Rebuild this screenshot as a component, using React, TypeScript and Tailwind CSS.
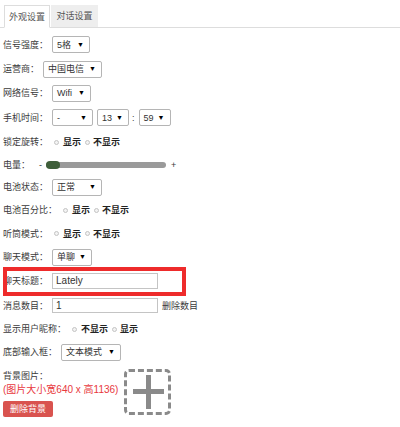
import type { ReactNode } from "react";

const FakeSelect = ({ value, w }: { value: string; w: string }) => (
  <div
    className={`${w} ml-[4px] h-[17px] flex items-center justify-between border border-[#b5b5b5] rounded-[2px] bg-white pl-[4px] pr-[5px] text-[#333]`}
  >
    <span>{value}</span>
    <span className="text-[7px] text-black">▼</span>
  </div>
);

const Dot = ({ cls = "" }: { cls?: string }) => (
  <span className={`inline-block w-[5px] h-[5px] rounded-full border border-[#c4c4c4] bg-[#f3f3f3] ${cls}`} />
);

const Row = ({ h, children, extra = "" }: { h: string; children: ReactNode; extra?: string }) => (
  <div className={`${h} flex items-center pl-[3px] ${extra}`}>{children}</div>
);

const Radios = ({ a, b }: { a: string; b: string }) => (
  <>
    <Dot cls="ml-[6px]" />
    <span className="ml-[4px] font-bold text-[#222]">{a}</span>
    <Dot cls="ml-[4px]" />
    <span className="ml-[3px] font-bold text-[#222]">{b}</span>
  </>
);

export default function App() {
  return (
    <div
      className="relative w-[400px] h-[427px] bg-white text-[9px] leading-[12px] text-[#3a3a3a] overflow-hidden"
      style={{ fontFamily: '"Liberation Sans", "Noto Sans CJK SC", sans-serif' }}
    >
      {/* tabs */}
      <div className="flex items-end pt-[5px] pl-[4px] border-b border-[#dddddd] h-[28px]">
        <div className="w-[46px] h-[23px] -mb-px flex items-center justify-center border border-[#dddddd] border-b-white bg-white text-[#555]">
          外观设置
        </div>
        <div className="w-[47px] h-[22px] ml-[1px] flex items-center justify-center bg-[#eeeeee] text-[#555]">
          对话设置
        </div>
      </div>

      <div className="pt-[4px]">
        <Row h="h-[25px]">
          <span>信号强度：</span>
          <FakeSelect value="5格" w="w-[38px]" />
        </Row>
        <Row h="h-[24px]">
          <span>运营商：</span>
          <FakeSelect value="中国电信" w="w-[59px]" />
        </Row>
        <Row h="h-[24px]">
          <span>网络信号：</span>
          <FakeSelect value="Wifi" w="w-[39px]" />
        </Row>
        <Row h="h-[25px]">
          <span>手机时间：</span>
          <FakeSelect value="-" w="w-[41px]" />
          <FakeSelect value="13" w="w-[32px]" />
          <span className="ml-[3px]">:</span>
          <FakeSelect value="59" w="w-[32px]" />
        </Row>
        <Row h="h-[24px]">
          <span>锁定旋转：</span>
          <Radios a="显示" b="不显示" />
        </Row>
        <Row h="h-[22px]">
          <span>电量：</span>
          <span className="ml-[9px]">-</span>
          <div className="ml-[4px] relative w-[120px] h-[6px] rounded-full bg-[#9a9a9a]">
            <div className="absolute left-0 top-[-1px] w-[14px] h-[8px] rounded-full bg-[#3f5f3a]" />
          </div>
          <span className="ml-[5px]">+</span>
        </Row>
        <Row h="h-[22px]">
          <span>电池状态：</span>
          <FakeSelect value="正常" w="w-[50px]" />
        </Row>
        <Row h="h-[24px]">
          <span>电池百分比：</span>
          <Radios a="显示" b="不显示" />
        </Row>
        <Row h="h-[23px]">
          <span>听筒模式：</span>
          <Radios a="显示" b="不显示" />
        </Row>
        <Row h="h-[24px]">
          <span>聊天模式：</span>
          <FakeSelect value="单聊" w="w-[40px]" />
        </Row>
        <div className="relative">
          <Row h="h-[24px]">
            <span>聊天标题：</span>
            <div className="ml-[4px] w-[106px] h-[16px] flex items-center border border-[#c4c4c4] px-[3px] text-[10px] text-[#333]">
              Lately
            </div>
          </Row>
          <div className="absolute left-[3px] top-[-2px] w-[183px] h-[29px] border-[4px] border-[#ee2b2b]" />
        </div>
        <Row h="h-[25px]">
          <span>消息数目：</span>
          <div className="ml-[4px] w-[106px] h-[15px] flex items-center border border-[#c4c4c4] px-[3px] text-[10px] text-[#333]">
            1
          </div>
          <span className="ml-[4px]">删除数目</span>
        </Row>
        <Row h="h-[22px]">
          <span>显示用户昵称：</span>
          <Radios a="不显示" b="显示" />
        </Row>
        <Row h="h-[24px]">
          <span>底部输入框：</span>
          <FakeSelect value="文本模式" w="w-[60px]" />
        </Row>

        {/* background picture */}
        <div className="flex items-start pl-[3px]">
          <div className="w-[121px] pt-[6px]">
            <div>背景图片：</div>
            <div className="mt-[2px] text-[10px] text-[#e8383d]">(图片大小宽640 x 高1136)</div>
            <button className="mt-[5px] h-[16px] w-[50px] rounded-[2px] bg-[#d9534f] text-white text-[9px] leading-[16px]">
              删除背景
            </button>
          </div>
          <div className="mt-[5px] w-[47px] h-[46px] rounded-[5px] border-[3px] border-dashed border-[#8a8a8a] flex items-center justify-center">
            <svg width="34" height="38" viewBox="0 0 34 38">
              <rect x="15" y="2" width="5" height="34" fill="#8a8a8a" />
              <rect x="2" y="16" width="31" height="5" fill="#8a8a8a" />
            </svg>
          </div>
        </div>
      </div>
    </div>
  );
}
